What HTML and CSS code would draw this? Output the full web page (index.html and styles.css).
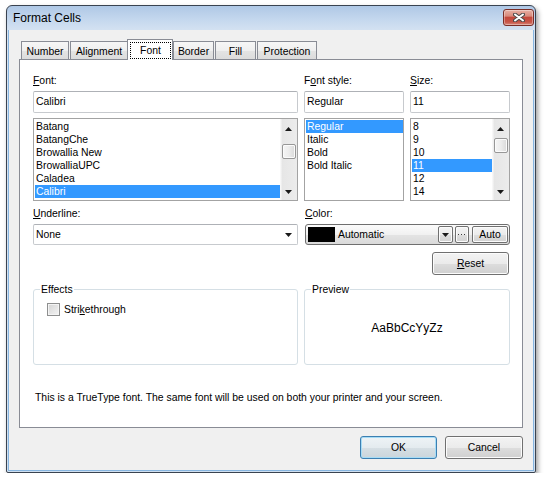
FILE: index.html
```html
<!DOCTYPE html>
<html>
<head>
<meta charset="utf-8">
<title>Format Cells</title>
<link rel="stylesheet" href="styles.css">
</head>
<body>
<div class="window">
  <div class="titlebar">
    <span class="title">Format Cells</span>
    <div class="close">
      <svg width="12" height="9" viewBox="0 0 12 9">
        <path d="M2 1.5 L10 7.5 M10 1.5 L2 7.5" stroke="#4a4a4a" stroke-width="4" stroke-linecap="round"/>
        <path d="M2 1.5 L10 7.5 M10 1.5 L2 7.5" stroke="#ffffff" stroke-width="2" stroke-linecap="round"/>
      </svg>
    </div>
  </div>
  <div class="client">
    <div class="tabs">
      <div class="tab tab-number">Number</div>
      <div class="tab tab-alignment">Alignment</div>
      <div class="tab tab-font selected"><span class="focus">Font</span></div>
      <div class="tab tab-border">Border</div>
      <div class="tab tab-fill">Fill</div>
      <div class="tab tab-protection">Protection</div>
    </div>
    <div class="panel">
      <div class="fields">
        <div class="col col-font">
          <div class="label"><u>F</u>ont:</div>
          <div class="input">Calibri</div>
          <div class="list">
            <div class="items">
              <div class="item">Batang</div>
              <div class="item">BatangChe</div>
              <div class="item">Browallia New</div>
              <div class="item">BrowalliaUPC</div>
              <div class="item">Caladea</div>
              <div class="item sel">Calibri</div>
            </div>
            <div class="sb">
              <div class="sb-btn up"><svg width="7" height="4" viewBox="0 0 7 4"><polygon points="0,4 7,4 3.5,0" fill="#1a1a1a"/></svg></div>
              <div class="sb-track"><div class="thumb thumb-font"></div></div>
              <div class="sb-btn down"><svg width="7" height="4" viewBox="0 0 7 4"><polygon points="0,0 7,0 3.5,4" fill="#1a1a1a"/></svg></div>
            </div>
          </div>
        </div>
        <div class="col col-style">
          <div class="label">F<u>o</u>nt style:</div>
          <div class="input">Regular</div>
          <div class="list">
            <div class="items">
              <div class="item sel">Regular</div>
              <div class="item">Italic</div>
              <div class="item">Bold</div>
              <div class="item">Bold Italic</div>
            </div>
          </div>
        </div>
        <div class="col col-size">
          <div class="label"><u>S</u>ize:</div>
          <div class="input">11</div>
          <div class="list">
            <div class="items">
              <div class="item">8</div>
              <div class="item">9</div>
              <div class="item">10</div>
              <div class="item sel">11</div>
              <div class="item">12</div>
              <div class="item">14</div>
            </div>
            <div class="sb">
              <div class="sb-btn up"><svg width="7" height="4" viewBox="0 0 7 4"><polygon points="0,4 7,4 3.5,0" fill="#1a1a1a"/></svg></div>
              <div class="sb-track"><div class="thumb thumb-size"></div></div>
              <div class="sb-btn down"><svg width="7" height="4" viewBox="0 0 7 4"><polygon points="0,0 7,0 3.5,4" fill="#1a1a1a"/></svg></div>
            </div>
          </div>
        </div>
      </div>

      <div class="row2">
        <div class="col col-underline">
          <div class="label"><u>U</u>nderline:</div>
          <div class="combo">
            <span class="combo-text">None</span>
            <svg class="combo-arrow" width="7" height="4" viewBox="0 0 7 4"><polygon points="0,0 7,0 3.5,4" fill="#1a1a1a"/></svg>
          </div>
        </div>
        <div class="col col-color">
          <div class="label"><u>C</u>olor:</div>
          <div class="color-combo">
            <span class="swatch"></span>
            <span class="color-text">Automatic</span>
            <span class="mini-btn drop"><svg width="7" height="4" viewBox="0 0 7 4"><polygon points="0,0 7,0 3.5,4" fill="#1a1a1a"/></svg></span>
            <span class="mini-btn dots"><svg width="8" height="2" viewBox="0 0 8 2"><rect x="0" y="0" width="1" height="1" fill="#3a3a3a"/><rect x="3" y="0" width="1" height="1" fill="#3a3a3a"/><rect x="6" y="0" width="1" height="1" fill="#3a3a3a"/></svg></span>
            <span class="mini-btn auto">Auto</span>
          </div>
        </div>
      </div>

      <div class="reset-row">
        <button class="btn reset"><u>R</u>eset</button>
      </div>

      <div class="groups">
        <fieldset class="group effects">
          <legend>Effects</legend>
          <div class="check-row">
            <span class="checkbox"></span>
            <span>Stri<u>k</u>ethrough</span>
          </div>
        </fieldset>
        <fieldset class="group preview">
          <legend>Preview</legend>
          <div class="preview-body"><span class="sample">AaBbCcYyZz</span></div>
        </fieldset>
      </div>

      <p class="note">This is a TrueType font. The same font will be used on both your printer and your screen.</p>
    </div>
    <div class="actions">
      <button class="btn ok">OK</button>
      <button class="btn cancel">Cancel</button>
    </div>
  </div>
</div>
</body>
</html>
```

FILE: styles.css
```css
* { box-sizing: border-box; }

body {
  margin: 0;
  background: #ffffff;
  font-family: "Liberation Sans", Arial, sans-serif;
  font-size: 10.4px;
  color: #000;
}

.window {
  margin: 5px 0 0 6px;
  width: 530px;
  height: 468px;
  border: 1px solid #3a4350;
  border-radius: 6px 6px 2px 2px;
  background: linear-gradient(#afc8e6 0px, #c5d8ee 14px, #d6e3f2 26px, #cfdff0 100%);
  box-shadow: 2px 3px 5px rgba(0, 0, 0, 0.38);
  display: flex;
  flex-direction: column;
}

.titlebar {
  height: 24px;
  flex: none;
  display: flex;
  align-items: center;
  padding-left: 6px;
}

.title {
  flex: 1;
  font-size: 12px;
  color: #000;
}

.close {
  align-self: flex-start;
  margin: 3px 1px 0 0;
  width: 31px;
  height: 17px;
  border: 1px solid #7a2e27;
  border-radius: 3px;
  background: linear-gradient(#e8b0a4 0%, #d98b7d 40%, #c4493c 50%, #c75548 80%, #d8897b 100%);
  box-shadow: inset 0 0 0 1px rgba(255, 255, 255, 0.35);
  display: flex;
  align-items: center;
  justify-content: center;
}

.client {
  flex: 1;
  margin: 0 1px 1px;
  background: #f0f0f0;
  border: 1px solid #86b5e0;
  border-top: none;
  padding: 9px 10px 0 10px;
  display: flex;
  flex-direction: column;
}

/* tabs */
.tabs {
  height: 20px;
  flex: none;
  display: flex;
  align-items: flex-end;
  padding-left: 2px;
}

.tab {
  height: 18px;
  border: 1px solid #898c95;
  border-bottom: none;
  background: linear-gradient(#f6f6f6 0%, #efefef 50%, #e4e4e4 51%, #dcdcdc 100%);
  display: flex;
  align-items: center;
  justify-content: center;
  padding-top: 1px;
}

.tab-number { width: 48px; margin-right: 1px; }
.tab-alignment { width: 58px; margin-right: -1px; }
.tab-font { width: 46px; margin-right: 0; }
.tab-border { width: 41px; margin-right: 1px; }
.tab-fill { width: 41px; margin-right: 1px; }
.tab-protection { width: 60px; }

.tab.selected {
  height: 21px;
  margin-bottom: -1px;
  background: #ffffff;
  position: relative;
  z-index: 2;
  padding: 2px 1px 1px 2px;
  align-items: stretch;
}

.focus {
  flex: 1;
  border: 1px dotted #000;
  display: flex;
  align-items: center;
  justify-content: center;
  padding-bottom: 1px;
}

/* panel */
.panel {
  height: 369px;
  flex: none;
  border: 1px solid #898c95;
  background: #ffffff;
  padding: 14px 12px 0 13px;
  display: flex;
  flex-direction: column;
}

.fields {
  display: flex;
  gap: 6px;
}

.col { display: flex; flex-direction: column; }
.col-font { width: 265px; }
.col-style { width: 100px; }
.col-size { width: 100px; }

.label {
  height: 13px;
  line-height: 13px;
  margin-bottom: 4px;
  white-space: nowrap;
}

.input {
  height: 22px;
  border: 1px solid #c7cace;
  border-top-color: #aeb1b6;
  border-radius: 2px;
  background: #fff;
  padding-left: 2px;
  line-height: 20px;
  margin-bottom: 5px;
}

.list {
  height: 83px;
  border: 1px solid #a3a3a3;
  background: #fff;
  display: flex;
}

.items {
  flex: 1;
  padding: 1px 0 0 1px;
  overflow: hidden;
}

.item {
  height: 13px;
  line-height: 13px;
  padding-left: 1px;
  white-space: nowrap;
}

.item.sel {
  background: #3399ff;
  color: #ffffff;
}

.sb {
  width: 17px;
  flex: none;
  display: flex;
  flex-direction: column;
  background: linear-gradient(90deg, #f7f7f7 0px, #f7f7f7 1px, #e6e6e6 2px, #ececec 100%);
}

.sb-btn {
  height: 17px;
  display: flex;
  justify-content: center;
  align-items: center;
}

.sb-btn.up { padding-top: 3px; }

.sb-track { flex: 1; }

.thumb {
  height: 15px;
  margin: 0 1px 0 2px;
  border: 1px solid #979797;
  border-radius: 2px;
  background: linear-gradient(90deg, #f5f5f5 0%, #ececec 50%, #d9d9d9 100%);
  box-shadow: inset 0 0 0 1px #fbfbfb;
}

.thumb-font { margin-top: 8px; }
.thumb-size { margin-top: 2px; }

/* row 2 */
.row2 {
  display: flex;
  gap: 7px;
  margin-top: 6px;
}

.col-underline { width: 265px; }
.col-color { width: 205px; }

.combo {
  height: 21px;
  border: 1px solid #c7cace;
  border-top-color: #aeb1b6;
  border-radius: 2px;
  background: #fff;
  padding-left: 2px;
  display: flex;
  align-items: center;
}

.combo-text { flex: 1; }
.combo-arrow { margin-right: 5px; }

.color-combo {
  height: 21px;
  border: 1px solid #6f6f6f;
  border-radius: 3px;
  background: linear-gradient(#fbfbfb 0%, #f1f1f1 50%, #e4e4e4 51%, #dadada 100%);
  display: flex;
  align-items: center;
  padding: 0 1px 0 2px;
}

.swatch {
  width: 27px;
  height: 15px;
  background: #000;
  flex: none;
}

.color-text {
  flex: 1;
  margin-left: 3px;
}

.mini-btn {
  height: 17px;
  border: 1px solid #707070;
  border-radius: 2px;
  background: linear-gradient(#f4f4f4 0%, #ebebeb 50%, #dedede 51%, #d2d2d2 100%);
  box-shadow: inset 0 0 0 1px #fbfbfb;
  display: flex;
  align-items: center;
  justify-content: center;
  flex: none;
}

.mini-btn.drop { width: 15px; }
.mini-btn.dots { width: 14px; margin-left: 2px; padding-top: 1px; }
.mini-btn.auto { width: 36px; margin-left: 3px; }

/* buttons */
.btn {
  height: 23px;
  border: 1px solid #707070;
  border-radius: 3px;
  background: linear-gradient(#f3f3f3 0%, #ebebeb 50%, #dddddd 51%, #d0d0d0 100%);
  box-shadow: inset 0 0 0 1px #fcfcfc;
  font: inherit;
  color: #000;
  padding: 0;
}

.reset-row {
  display: flex;
  justify-content: flex-end;
  margin-top: 7px;
}

.reset { width: 77px; margin-right: 1px; }

/* group boxes */
.groups {
  display: flex;
  gap: 6px;
  margin-top: 8px;
}

.group {
  margin: 0;
  height: 82px;
  border: 1px solid #d5dfe5;
  border-radius: 3px;
  padding: 0 0 0 6px;
  min-width: 0;
}

.group legend {
  padding: 0 1px;
  line-height: 13px;
}

.effects { width: 265px; }
.preview { width: 206px; padding-right: 6px; }

.check-row {
  display: flex;
  align-items: center;
  margin: 7px 0 0 7px;
  gap: 4px;
}

.checkbox {
  width: 13px;
  height: 13px;
  border: 1px solid #8e8f8f;
  background: linear-gradient(135deg, #d4d4d4 0%, #f4f4f4 100%);
  box-shadow: inset 0 0 0 1px #f4f4f4;
}

.preview-body {
  display: flex;
  justify-content: center;
  padding-top: 25px;
}

.sample {
  font-size: 12px;
  line-height: 14px;
}

.note {
  margin: 26px 0 0 2px;
  line-height: 13px;
  white-space: nowrap;
}

/* dialog buttons */
.actions {
  display: flex;
  justify-content: flex-end;
  gap: 8px;
  margin-top: 8px;
}

.ok {
  width: 77px;
  border-color: #3c7fb1;
  box-shadow: inset 0 0 0 1px #a6dcf6;
  background: linear-gradient(#eef3f6 0%, #e4ebef 50%, #d6dfe4 51%, #cbd5db 100%);
}

.cancel { width: 78px; }
```
